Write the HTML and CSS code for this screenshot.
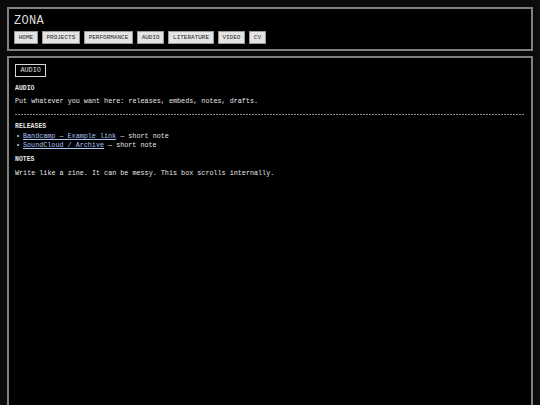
FILE: index.html
```html
<!DOCTYPE html>
<html>
<head>
<meta charset="utf-8">
<link rel="stylesheet" href="styles.css">
</head>
<body>
<header class="header">
  <div class="title">ZONA</div>
  <nav class="nav">
    <a class="btn">HOME</a>
    <a class="btn">PROJECTS</a>
    <a class="btn">PERFORMANCE</a>
    <a class="btn">AUDIO</a>
    <a class="btn">LITERATURE</a>
    <a class="btn">VIDEO</a>
    <a class="btn">CV</a>
  </nav>
</header>
<main class="panel">
  <div class="tag">AUDIO</div>
  <h2 class="h-main">AUDIO</h2>
  <p class="text">Put whatever you want here: releases, embeds, notes, drafts.</p>
  <div class="rule"></div>
  <h3 class="h-sub">RELEASES</h3>
  <ul class="list">
    <li><a class="link">Bandcamp — Example link</a> — short note</li>
    <li><a class="link">SoundCloud / Archive</a> — short note</li>
  </ul>
  <h3 class="h-sub notes">NOTES</h3>
  <p class="text last">Write like a zine. It can be messy. This box scrolls internally.</p>
</main>
</body>
</html>
```
FILE: styles.css
```css
html, body {
  margin: 0;
  padding: 0;
  background: #0b0b0b;
}
body {
  padding: 7px;
  font-family: "Liberation Mono", "DejaVu Sans Mono", monospace;
  color: #e6e6e6;
  overflow: hidden;
  height: 405px;
  box-sizing: border-box;
}
.header {
  border: 2px solid #808080;
  background: #000;
  padding: 5px 5px 5px 5px;
  height: 44px;
  box-sizing: border-box;
}
.title {
  font-size: 12px;
  line-height: 14px;
  letter-spacing: 0.3px;
  color: #dcdcdc;
}
.nav {
  display: flex;
  gap: 4px;
  margin-top: 3px;
}
.btn {
  display: block;
  background: #e4e4e4;
  border: 1px solid #9a9a9a;
  color: #2a2a2a;
  font-size: 6px;
  line-height: 11px;
  padding: 0 3.7px;
}
.panel {
  display: block;
  margin-top: 5px;
  border: 2px solid #808080;
  background: #000;
  height: 420px;
  padding: 6px 6px;
  font-size: 6.75px;
  line-height: 9px;
}
.tag {
  display: block;
  width: fit-content;
  border: 1px solid #d8d8d8;
  font-size: 6.75px;
  line-height: 11px;
  padding: 0 4.5px;
  color: #e0e0e0;
}
.h-main {
  margin: 7px 0 0;
  font-size: 6.5px;
  line-height: 9px;
  font-weight: bold;
}
.text {
  margin: 4px 0 0;
  font-size: 6.75px;
  line-height: 9px;
}
.rule {
  margin-top: 8px;
  height: 1px;
  background: repeating-linear-gradient(90deg, #8a8a8a 0 2px, transparent 2px 3px);
}
.h-sub {
  margin: 7px 0 0;
  font-size: 6.5px;
  line-height: 9px;
  font-weight: bold;
}
.list {
  list-style: none;
  margin: 1px 0 0;
  padding: 0;
  font-size: 6.75px;
  line-height: 8.5px;
}
.list li::before {
  content: "\2022";
  display: inline-block;
  width: 7px;
  margin-left: 1px;
  color: #cfcfcf;
}
.link {
  color: #a9c6f5;
  text-decoration: underline;
}
.h-sub.notes {
  margin-top: 5.5px;
}
.text.last {
  margin-top: 5px;
}
```
